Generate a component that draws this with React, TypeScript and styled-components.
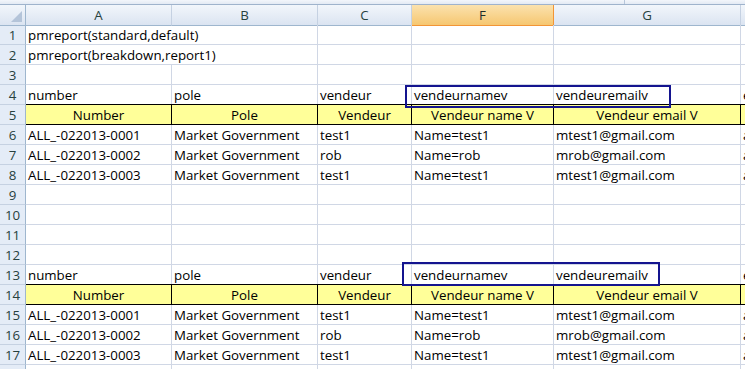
import React from "react";
import styled, { createGlobalStyle, css } from "styled-components";

const Global = createGlobalStyle`
  html, body { margin: 0; padding: 0; background: #fff; }
  body { width: 745px; height: 369px; overflow: hidden; font-family: "Open Sans", "Liberation Sans", sans-serif; }
`;

const Page = styled.div`
  width: 745px;
  height: 369px;
  overflow: hidden;
  position: relative;
  background: #fff;
`;

const TopStrip = styled.div`
  height: 5px;
  box-sizing: border-box;
  background: linear-gradient(#f3f6fb, #e3eaf4);
  border-bottom: 1px solid #9fb3cc;
  display: flex;
`;

const StripBox = styled.div`
  width: 625px;
  box-sizing: border-box;
  border-right: 1px solid #b7c6da;
`;

const Sheet = styled.div`
  display: grid;
  grid-template-columns: 26px 146px 146px 94px 142px 187px 200px;
  grid-auto-rows: 20px;
  position: relative;
`;

const ColHead = styled.div<{ $sel?: boolean }>`
  box-sizing: border-box;
  height: 21px;
  border-right: 1px solid #c5d1e2;
  border-bottom: 1px solid #9eb6ce;
  background: linear-gradient(#f2f6fb, #dbe4f1);
  color: #27413e;
  font-size: 13.3px;
  line-height: 21px;
  text-align: center;
  ${(p) =>
    p.$sel &&
    css`
      background: linear-gradient(#fbe2ae, #f6c771);
      border-right-color: #f29536;
      border-bottom-color: #f29536;
      color: #1f2d2b;
    `}
`;

const Corner = styled(ColHead)`
  position: relative;
  border-right-color: #9eb6ce;
  &::after {
    content: "";
    position: absolute;
    right: 3px;
    bottom: 3px;
    border-left: 11px solid transparent;
    border-bottom: 11px solid #b4c4d9;
  }
`;

const RowHead = styled.div`
  box-sizing: border-box;
  border-right: 1px solid #9eb6ce;
  border-bottom: 1px solid #c5d1e2;
  background: #e4ecf7;
  color: #27413e;
  font-size: 13.3px;
  line-height: 21px;
  text-align: center;
  overflow: hidden;
`;

const Cell = styled.div<{ $head?: boolean; $span?: number }>`
  box-sizing: border-box;
  border-right: 1px solid #d0d7e5;
  border-bottom: 1px solid #d0d7e5;
  font-size: 13.3px;
  line-height: 21px;
  color: #000;
  padding-left: 2px;
  white-space: nowrap;
  overflow: hidden;
  ${(p) => p.$span && css`grid-column: span ${p.$span};`}
  ${(p) =>
    p.$head &&
    css`
      background: #ffff99;
      border-right-color: #000;
      border-bottom-color: #000;
      box-shadow: 0 -1px 0 #000;
      text-align: center;
      padding-left: 0;
    `}
`;

const Frame = styled.div<{ $l: number; $t: number; $w: number; $h: number }>`
  position: absolute;
  box-sizing: border-box;
  border: 2px solid #14148f;
  left: ${(p) => p.$l}px;
  top: ${(p) => p.$t}px;
  width: ${(p) => p.$w}px;
  height: ${(p) => p.$h}px;
  pointer-events: none;
`;

const cols = ["A", "B", "C", "F", "G", ""];

const fieldRow = ["number", "pole", "vendeur", "vendeurnamev", "vendeuremailv", "emailvendeur"];
const headRow = ["Number", "Pole", "Vendeur", "Vendeur name V", "Vendeur email V", ""];
const data = [
  ["ALL_-022013-0001", "Market Government", "test1", "Name=test1", "mtest1@gmail.com", "a"],
  ["ALL_-022013-0002", "Market Government", "rob", "Name=rob", "mrob@gmail.com", "a"],
  ["ALL_-022013-0003", "Market Government", "test1", "Name=test1", "mtest1@gmail.com", "a"],
];

type RowDef = { kind: "text"; text: string } | { kind: "empty" } | { kind: "cells"; cells: string[]; head?: boolean };

const rows: RowDef[] = [
  { kind: "text", text: "pmreport(standard,default)" },
  { kind: "text", text: "pmreport(breakdown,report1)" },
  { kind: "empty" },
  { kind: "cells", cells: fieldRow },
  { kind: "cells", cells: headRow, head: true },
  ...data.map((c) => ({ kind: "cells" as const, cells: c })),
  { kind: "empty" },
  { kind: "empty" },
  { kind: "empty" },
  { kind: "empty" },
  { kind: "cells", cells: fieldRow },
  { kind: "cells", cells: headRow, head: true },
  ...data.map((c) => ({ kind: "cells" as const, cells: c })),
  { kind: "empty" },
];

export default function App() {
  return (
    <Page>
      <Global />
      <TopStrip>
        <StripBox />
      </TopStrip>
      <Sheet>
        <Corner />
        {cols.map((c, i) => (
          <ColHead key={i} $sel={c === "F"}>
            {c}
          </ColHead>
        ))}
        {rows.map((r, i) => (
          <React.Fragment key={i}>
            <RowHead>{i + 1}</RowHead>
            {r.kind === "text" && (
              <>
                <Cell $span={2}>{r.text}</Cell>
                <Cell />
                <Cell />
                <Cell />
                <Cell />
              </>
            )}
            {r.kind === "empty" && cols.map((_, j) => <Cell key={j} />)}
            {r.kind === "cells" &&
              r.cells.map((t, j) => (
                <Cell key={j} $head={r.head}>
                  {t}
                </Cell>
              ))}
          </React.Fragment>
        ))}
      </Sheet>
      <Frame $l={405} $t={85} $w={266} $h={23} />
      <Frame $l={402} $t={262} $w={258} $h={24} />
    </Page>
  );
}
